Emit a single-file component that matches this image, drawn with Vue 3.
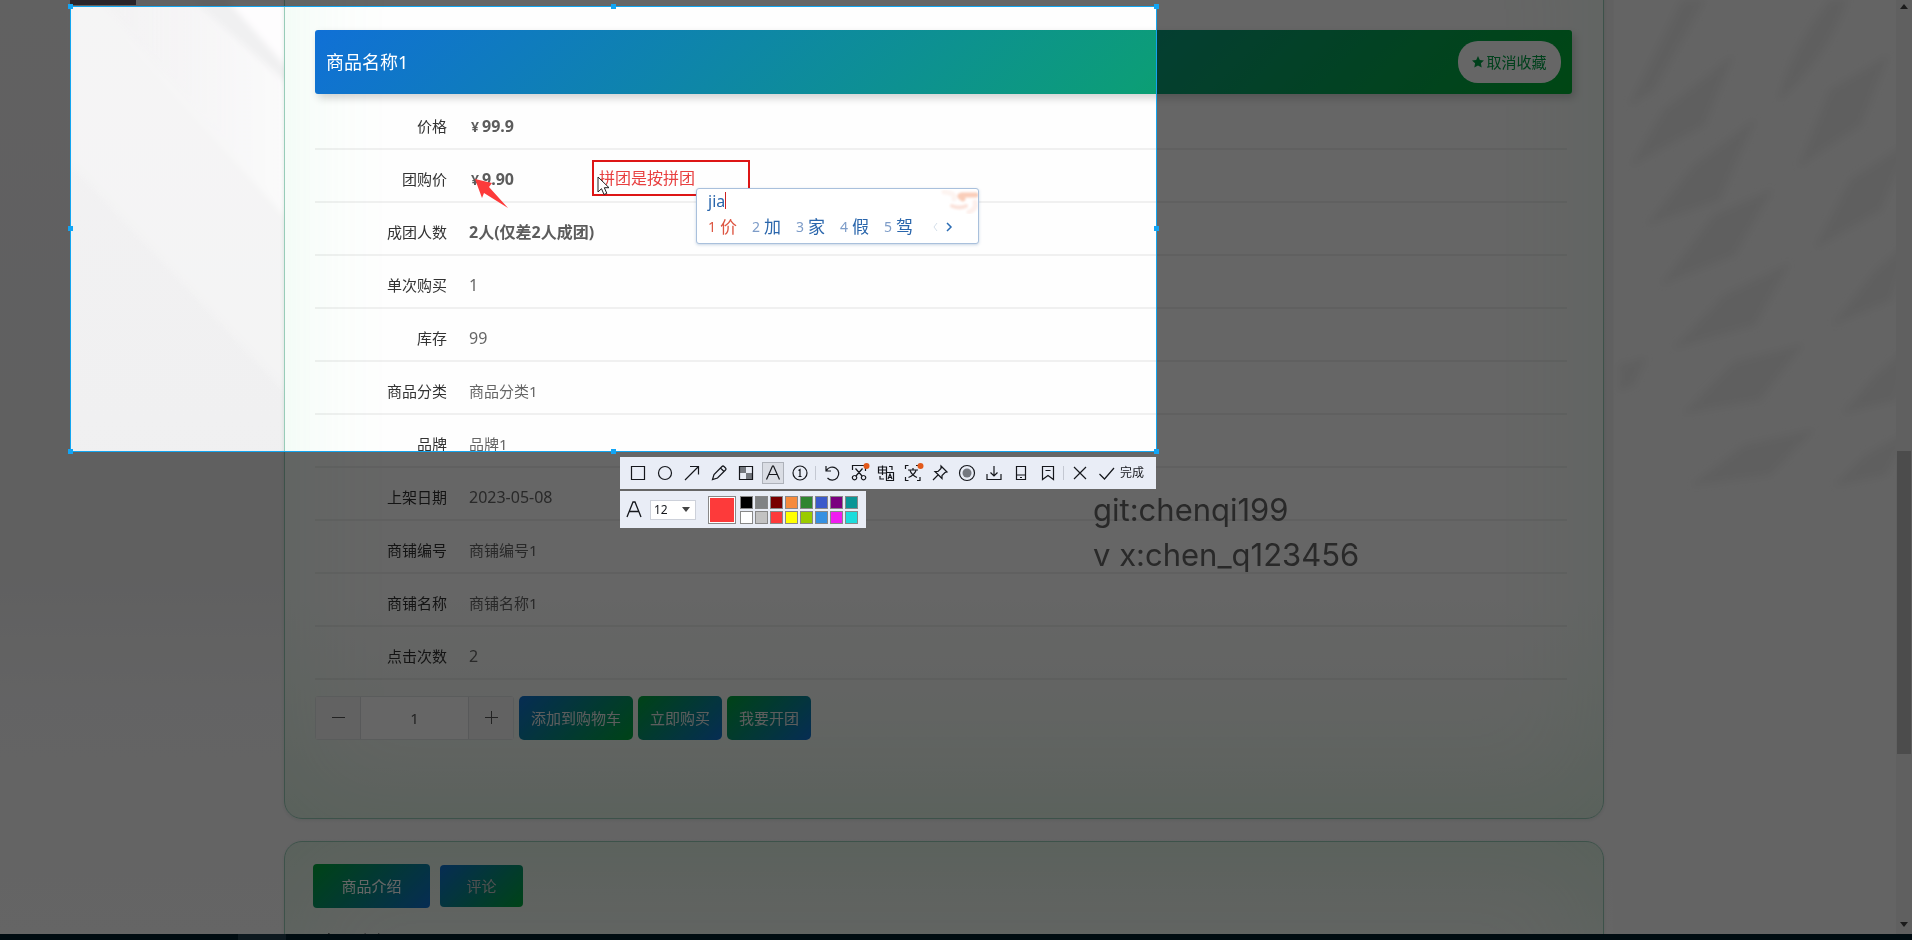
<script setup>
import { ref } from 'vue'

const rows = [
  { label: '价格', value: '99.9', price: true },
  { label: '团购价', value: '9.90', price: true },
  { label: '成团人数', value: '2人(仅差2人成团)', strong: true },
  { label: '单次购买', value: '1', num: true },
  { label: '库存', value: '99', num: true },
  { label: '商品分类', value: '商品分类1' },
  { label: '品牌', value: '品牌1' },
  { label: '上架日期', value: '2023-05-08', num: true },
  { label: '商铺编号', value: '商铺编号1' },
  { label: '商铺名称', value: '商铺名称1' },
  { label: '点击次数', value: '2', num: true },
]
const qty = ref('1')
const size = ref('12')
const candidates = ['价', '加', '家', '假', '驾']
const colors = [
  '#000000', '#808284', '#780000', '#f58a3c', '#2f8530', '#3b5acb', '#7a007f', '#0a9596',
  '#ffffff', '#c2c2c2', '#fd3a3a', '#ffff00', '#9acb00', '#3590e2', '#f01cf0', '#1cdcdc',
]
const tools = [
  { name: '矩形', d: 'M4.5 4.500h13v13h-13z' },
  { name: '椭圆', d: 'M11 4.500a6.500 6.500 0 1 0 0 13a6.500 6.500 0 1 0 0-13' },
  { name: '箭头', d: 'M4 18L17.500 4.500M9 4.500h8.500v8' },
  { name: '画笔', d: 'M4.500 17.500l1.500-5l8-8q1-1 2 0l1.500 1.500q1 1 0 2l-8 8zM12.500 6l3.500 3.500' },
  { name: '马赛克', d: 'M4.500 4.500h13v13h-13z', fill: 'M5 5h6v6h-6zM11 11h6v6h-6z' },
  { name: '文字', d: 'M4.500 17.500L10.500 4h1L17.500 17.500M7 12.500h8', active: true },
  { name: '序号', d: 'M11 4a7 7 0 1 0 0 14a7 7 0 1 0 0-14M9.500 8.500l1.500-1v7M9.500 14.500h3' },
  { sep: true, name: 's1' },
  { name: '撤销', d: 'M5 4v5h5M5.500 8.500a6.500 6.500 0 1 1 1 7.500' },
  { name: '长截图', d: 'M4.500 8v-4.500h12M17.500 6v3M7.500 6.500l7 8M14.500 6.500l-7 8M6.500 13.500a2.200 2.200 0 1 0 .1 0M15.500 13.500a2.200 2.200 0 1 0 .1 0', dot: true },
  { name: '翻译', d: 'M3.500 5h8v6h-8zM7.500 3.500v9.500M3.500 8h8M11.500 10.500h7v8h-7zM13 17l2-5l2 5M13.500 15.500h3M14 4.500h3v3.500M5 14v3h4' },
  { name: '识别', d: 'M3.500 7v-3.500h3M14 3.500h4M3.500 15v3.500h3M15 18.500h3v-3.500M6 8h10M11 6v2M8 8.500q2 5 7 7M14 8.500q-2 5-7.500 7', dot: true },
  { name: '固定', d: 'M12 4l6 6l-2 .500l-3 3v3l-7-7h3l3-3zM9 13l-5 5' },
  { name: '录屏', d: 'M11 3.500a7.500 7.500 0 1 0 0 15a7.500 7.500 0 1 0 0-15', fill: 'M11 6.500a4.500 4.500 0 1 0 0 9a4.500 4.500 0 1 0 0-9' },
  { name: '保存', d: 'M4 12v5.500h14v-5.500M11 4v10M7.500 10.500l3.500 3.500l3.500-3.500' },
  { name: '手机', d: 'M6.500 4.500h9v13h-9zM6.500 13h9M10 15.500h2' },
  { name: '收藏', d: 'M5.500 4.500h11v13l-5.500-4l-5.500 4zM8.500 8.500h5' },
  { sep: true, name: 's2' },
  { name: '关闭', d: 'M5 5l12 12M17 5l-12 12' },
]
const leaves = [
  'M1690 0L1640 90L1616 105L1668 0z', 'M1832 0Q1810 60 1764 100Q1775 50 1815 0z',
  'M1718 56L1690 125L1618 165L1650 110z', 'M1872 56L1845 125L1784 166L1815 90z',
  'M1740 120L1705 200L1634 224L1680 165z', 'M1895 140L1865 210L1800 248L1835 180z',
  'M1757 190L1720 255L1648 284L1700 215z', 'M1895 240L1875 300L1818 324L1860 270z',
  'M1774 264L1740 325L1660 348L1710 295z', 'M1787 345L1745 400L1670 413L1720 362z',
  'M1895 345L1880 400L1828 413L1860 375z', 'M1798 430L1755 475L1678 485L1730 445z',
  'M1895 430L1870 475L1820 485L1850 455z', 'M1632 358L1620 385L1606 390v-25z',
]
</script>

<template>
  <div class="screen">
    <div class="browser">
      <svg class="backdrop" viewBox="0 0 1896 934" preserveAspectRatio="none" aria-hidden="true">
        <defs>
          <linearGradient id="wall" x1="0" y1="0" x2="0" y2="1">
            <stop offset="0" stop-color="#f3f2f3" />
            <stop offset=".45" stop-color="#f0f0f1" />
            <stop offset=".6" stop-color="#efeff0" />
            <stop offset=".75" stop-color="#f8f8f9" />
            <stop offset="1" stop-color="#fcfcfc" />
          </linearGradient>
          <linearGradient id="ray" x1="0" y1="0" x2="1" y2="0">
            <stop offset="0" stop-color="#f9f9fa" stop-opacity="0" />
            <stop offset="1" stop-color="#fbfafb" />
          </linearGradient>
          <filter id="soft"><feGaussianBlur stdDeviation="3" /></filter>
        </defs>
        <path d="M0 0H1896V934H0z" fill="url(#wall)" />
        <path d="M1600 0H1896V934H1600z" fill="#f9f9f9" />
        <g filter="url(#soft)">
          <path d="M90 0L290 225V0z" fill="url(#ray)" />
          <path d="M215 0L290 85V0z" fill="#fefdfe" />
          <path d="M190 0L290 88v-14L225 0z" fill="#f0f0f1" />
          <path d="M70 165L290 400V225L100 0H70z" fill="#f7f7f8" opacity=".5" />
          <path v-for="d in leaves" :key="d" :d="d" fill="#eeeeee" />
        </g>
      </svg>

      <main class="content">
        <section class="card product">
          <header class="title-bar">
            <h1>商品名称1</h1>
            <button class="fav" type="button">
              <svg width="12" height="12" viewBox="0 0 12 12" aria-hidden="true"><path d="M6 0l1.800 3.900l4.200.500l-3.100 2.900l.8 4.200L6 9.400L2.300 11.500l.8-4.200L0 4.400l4.200-.5z" fill="currentColor" /></svg>取消收藏
            </button>
          </header>
          <dl>
            <div v-for="r in rows" :key="r.label" class="row">
              <dt>{{ r.label }}</dt>
              <dd :class="{ strong: r.strong || r.price, num: r.num || r.price || r.strong }">
                <span v-if="r.price" class="yen">¥</span>{{ r.value }}
              </dd>
            </div>
          </dl>
          <div class="actions">
            <div class="stepper">
              <button type="button" aria-label="减少"><svg width="13" height="13" viewBox="0 0 13 13"><path d="M0 6.500h13" /></svg></button>
              <input v-model="qty" type="text" aria-label="数量">
              <button type="button" aria-label="增加"><svg width="13" height="13" viewBox="0 0 13 13"><path d="M0 6.500h13M6.500 0v13" /></svg></button>
            </div>
            <button class="btn blue" type="button">添加到购物车</button>
            <button class="btn green" type="button">立即购买</button>
            <button class="btn green" type="button">我要开团</button>
          </div>
        </section>

        <section class="card detail">
          <nav class="tabs">
            <button class="tab active" type="button">商品介绍</button>
            <button class="tab" type="button">评论</button>
          </nav>
          <p>商品介绍</p>
        </section>
      </main>

      <div class="scrollbar" aria-hidden="true">
        <svg width="8" height="5" viewBox="0 0 8 5"><path d="M4 0l4 5H0z" /></svg>
        <div class="track"><div class="thumb"></div></div>
        <svg width="8" height="5" viewBox="0 0 8 5"><path d="M0 0h8L4 5z" /></svg>
      </div>
      <div class="top-tab"></div>
    </div>
    <div class="taskbar"><span></span></div>

    <div class="selection">
      <i v-for="n in 8" :key="n" :class="'h' + n"></i>
    </div>

    <p class="mark">git:chenqi199<br>v x:chen_q123456</p>

    <div class="note">拼团是按拼团</div>
    <svg class="red-arrow" width="36" height="32" viewBox="0 0 36 32" aria-hidden="true"><path d="M1 1L18 5L15 9L34 30L10 15L8 20z" fill="#fd3a3a" /></svg>
    <svg class="cursor" width="14" height="20" viewBox="0 0 14 20" aria-hidden="true"><path d="M1 1v15l3.500-3.300l2.500 5.800l2.800-1.200l-2.500-5.600h4.700z" fill="#fff" stroke="#222" /></svg>

    <div class="ime">
      <svg class="ime-logo" width="38" height="28" viewBox="0 0 38 28" aria-hidden="true">
        <defs><filter id="haze"><feGaussianBlur stdDeviation="1" /></filter></defs>
        <g fill="none" stroke-linecap="round" filter="url(#haze)">
          <path d="M4 3q12 1 10 7" stroke="#fdf4f1" stroke-width="5" />
          <path d="M36 6H22q-5 1 1 4" stroke="#f9cdb9" stroke-width="5" />
          <path d="M12 17q8 3 14 0" stroke="#fbe2da" stroke-width="4" />
          <path d="M35 13q2 7-6 10" stroke="#fdf0ec" stroke-width="5" />
        </g>
      </svg>
      <div class="typed">jia<b></b></div>
      <ol>
        <li v-for="(c, i) in candidates" :key="c" :class="{ first: i === 0 }"><small>{{ i + 1 }}</small>{{ c }}</li>
        <li class="pager">
          <svg width="20" height="10" viewBox="0 0 20 10" fill="none"><path d="M4 1L1 5l3 4" stroke="#d5dfea" /><path d="M14 1l4 4l-4 4" stroke="#2a6cb4" stroke-width="1.500" /></svg>
        </li>
      </ol>
    </div>

    <div class="tool-panel">
      <div class="toolbar">
        <template v-for="t in tools" :key="t.name">
          <span v-if="t.sep" class="sep"></span>
          <button v-else type="button" :aria-label="t.name" :class="{ on: t.active }">
            <svg width="22" height="22" viewBox="0 0 22 22" fill="none">
              <path v-if="t.fill" :d="t.fill" fill="#74787f" />
              <path :d="t.d" stroke="#15171c" stroke-width="1.200" />
              <circle v-if="t.dot" cx="18.500" cy="4" r="3" fill="#e2591b" />
            </svg>
          </button>
        </template>
        <button type="button" class="done">
          <svg width="22" height="22" viewBox="0 0 22 22" fill="none"><path d="M3.500 12l5 5L18 6" stroke="#15171c" stroke-width="1.200" /></svg>完成
        </button>
      </div>
      <div class="options">
        <svg width="16" height="17" viewBox="0 0 16 17" fill="none" aria-hidden="true"><path d="M1 16L7 1h2l6 15M3.500 10.500h9" stroke="#15171c" stroke-width="1.300" /></svg>
        <span class="pick">
          <select v-model="size" aria-label="字号"><option>12</option></select>
          <svg width="8" height="5" viewBox="0 0 8 5" aria-hidden="true"><path d="M0 0h8L4 5z" fill="#444" /></svg>
        </span>
        <button type="button" class="current" aria-label="当前颜色"></button>
        <div class="swatches">
          <button v-for="c in colors" :key="c" type="button" :aria-label="c" :style="{ background: c }"></button>
        </div>
      </div>
    </div>
  </div>
</template>

<style>
body { margin: 0; }
</style>

<style scoped>
* { box-sizing: border-box; }
.screen {
  position: relative;
  display: flex;
  flex-direction: column;
  height: 100vh;
  overflow: hidden;
  font: 15px/24px "Noto Sans", "Noto Sans CJK SC", sans-serif;
  color: #333;
}
button, input, select { font: inherit; color: inherit; margin: 0; padding: 0; border: 0; background: none; }
h1, p, dl, dd, ol { margin: 0; padding: 0; font-weight: 400; }
.browser { position: relative; display: flex; flex: 1; min-height: 0; overflow: hidden; background: #f7f7f7; }
.backdrop { position: absolute; inset: 0; width: 100%; height: 100%; }
.content { position: relative; flex: 1; padding: 0 292px 0 284px; }
.card {
  border: 1px solid #98ccb8;
  border-radius: 18px;
  background: linear-gradient(to top, #edf6ee, #fefefe 220px);
  box-shadow: inset 0 0 110px rgba(90, 220, 140, .12), 0 1px 4px rgba(0, 80, 50, .12);
}
.product { margin-top: -120px; padding: 149px 31px 78px 30px; }
.detail { margin-top: 22px; padding: 22px 28px; height: 320px; background: linear-gradient(#edf6ee, #fefefe 220px); }
.title-bar {
  display: flex;
  align-items: center;
  justify-content: space-between;
  height: 64px;
  padding: 0 11px;
  border-radius: 3px;
  background: linear-gradient(135deg, #1070d6, #0c9d78 66%, #00b032);
  box-shadow: 3px 4px 8px rgba(0, 0, 0, .18);
}
h1 { font-size: 18px; color: #fff; }
.fav {
  display: flex;
  align-items: center;
  justify-content: center;
  gap: 2px;
  width: 103px;
  height: 42px;
  border-radius: 20px;
  background: #fff;
  color: #00a045;
}
dl { margin-top: 3px; }
.row { display: grid; grid-template-columns: 132px 1fr; gap: 22px; height: 53px; padding-top: 17px; margin-right: 5px; border-bottom: 2px solid rgba(0, 0, 0, .055); }
dt { text-align: right; }
dd { color: #666; }
.num { font-size: 16px; }
.strong { font-weight: 700; color: #5c5c5c; }
.yen { padding: 0 3px 0 2px; font-size: 14px; }
.actions { display: flex; gap: 5px; margin-top: 16px; }
.stepper { display: flex; width: 199px; height: 44px; border: 1px solid #e2e5e5; border-radius: 3px; background: #fff; color: #555; }
.stepper button { width: 44px; background: #f4f4f4; }
.stepper path { stroke: #555; }
.stepper input { flex: 1; min-width: 0; text-align: center; border: solid #dcdfe2; border-width: 0 1px; }
.btn { padding: 0 12px; height: 44px; border-radius: 5px; color: #e8e8e8; }
.blue, .tab { background: linear-gradient(135deg, #1070d0, #00a83a); }
.green, .tab.active { background: linear-gradient(135deg, #00a83a, #1070d0); }
.tabs { display: flex; align-items: center; gap: 10px; }
.tab { width: 83px; height: 42px; border-radius: 4px; color: #c8c8c8; }
.tab.active { width: 117px; height: 44px; color: #fff; }
.detail p { padding: 22px 7px; font-size: 18px; }
.scrollbar { position: relative; display: flex; flex-direction: column; align-items: center; width: 16px; padding: 4px 0 7px; background: #f1f1f1; }
.scrollbar path { fill: #444; }
.track { display: flex; flex-direction: column; flex: 1; width: 100%; padding: 0 1px; }
.track::before { content: ""; flex: 442; }
.track::after { content: ""; flex: 168; }
.thumb { flex: 303; background: #bdbdbd; }
.top-tab { position: absolute; left: 70px; top: 0; width: 66px; height: 5px; background: #6a5a66; }
.taskbar { height: 6px; padding-left: 238px; background: #001e2c; }
.taskbar span { display: block; width: 48px; height: 6px; background: #22404e; }

.selection { position: absolute; left: 70px; top: 6px; width: 1087px; height: 446px; border: 1px solid #12a5f0; box-shadow: 0 0 0 2000px rgba(0, 0, 0, .6); }
.selection i { position: absolute; width: 5px; height: 5px; background: #12a5f5; }
.h1, .h4, .h6 { left: -3px; }
.h2, .h7 { left: 50%; margin-left: -3px; }
.h3, .h5, .h8 { right: -3px; }
.h1, .h2, .h3 { top: -3px; }
.h4, .h5 { top: 50%; margin-top: -3px; }
.h6, .h7, .h8 { bottom: -3px; }

.mark { position: absolute; left: 1093px; top: 487px; font: 31px/45px Inter, "Noto Sans", sans-serif; color: #292929; white-space: pre; }
.note { position: absolute; left: 592px; top: 160px; width: 158px; height: 36px; padding-left: 5px; border: 2px solid #dd1515; font-size: 16px; line-height: 33px; color: #e84040; }
.red-arrow { position: absolute; left: 474px; top: 178px; }
.cursor { position: absolute; left: 597px; top: 176px; }

.ime { position: absolute; left: 696px; top: 188px; width: 283px; height: 56px; padding: 0 11px; border: 1px solid #a9c0dc; border-radius: 3px; background: #fff; color: #2a66ac; box-shadow: 0 1px 3px rgba(40, 90, 150, .25); }
.ime-logo { position: absolute; right: 0; top: 0; }
.typed { display: flex; align-items: center; height: 23px; font-size: 16px; }
.typed b { width: 1px; height: 17px; background: #c22; }
.ime ol { display: flex; list-style: none; font-size: 17px; line-height: 30px; }
.ime li { display: flex; flex: none; align-items: center; gap: 4px; width: 44px; }
.ime small { font-size: 14px; color: #7d9cc8; }
.ime .first, .ime .first small { color: #dd5440; }
.ime .pager { padding-left: 5px; }

.tool-panel { position: absolute; left: 620px; top: 457px; width: 536px; display: flex; flex-direction: column; align-items: flex-start; gap: 2px; color: #15171c; }
.toolbar { display: flex; align-items: center; width: 100%; height: 32px; padding-left: 4px; background: #e9edf6; }
.toolbar button { display: flex; align-items: center; justify-content: center; width: 27px; height: 22px; }
.toolbar .on svg { background: #dadde4; outline: 1px solid #aeb2ba; outline-offset: -1px; }
.sep { width: 1px; height: 14px; margin: 0 2px; background: #c4c8d2; }
.toolbar .done { width: auto; padding-left: 3px; gap: 2px; font-size: 12px; }
.options { display: flex; align-items: center; height: 37px; padding: 0 8px 0 6px; background: #e9edf6; }
.pick { position: relative; display: flex; margin: 0 12px 0 8px; }
.pick select { appearance: none; width: 46px; height: 20px; padding-left: 3px; border: 1px solid #cdd1da; background: #fff; font-size: 12px; line-height: 16px; }
.pick svg { position: absolute; right: 6px; top: 7px; }
.options .current { width: 28px; height: 28px; border: 1px solid #888; background: #fd3a3a; box-shadow: inset 0 0 0 1px #fff; }
.swatches { display: grid; grid-template-columns: repeat(8, 13px); gap: 2px; margin-left: 4px; }
.swatches button { height: 13px; border: 1px solid #888; }
</style>
